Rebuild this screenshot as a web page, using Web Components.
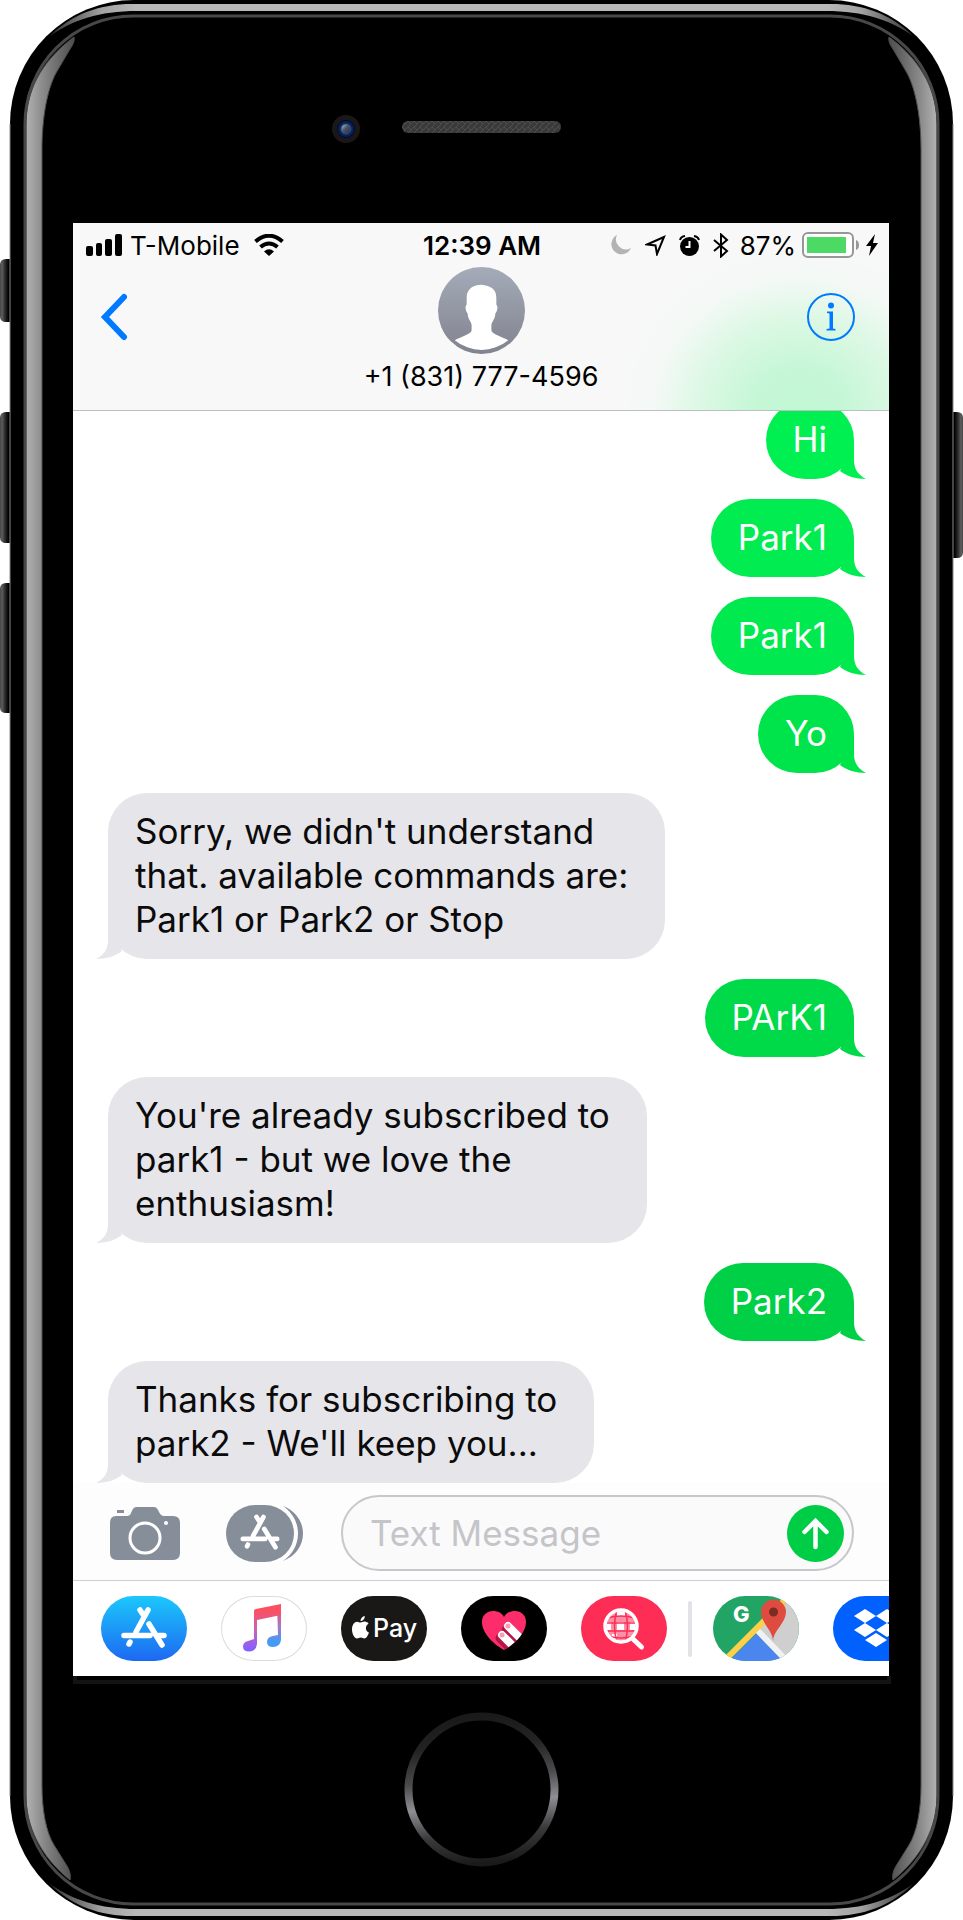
<!DOCTYPE html>
<html lang="en">
<head>
<meta charset="utf-8">
<meta name="viewport" content="width=device-width, initial-scale=1">
<title>Messages</title>
<style>
  body { margin: 0; background: #fff; font-family: Inter, "Liberation Sans", sans-serif; color: #0b0b0c; }
</style>
</head>
<body>
<phone-frame>
  <chat-header>+1 (831) 777-4596</chat-header>
  <message-list>
    <chat-bubble sent style="--tint:#00f052">Hi</chat-bubble>
    <chat-bubble sent style="--tint:#00ec50">Park1</chat-bubble>
    <chat-bubble sent style="--tint:#00e94e">Park1</chat-bubble>
    <chat-bubble sent style="--tint:#00e44b">Yo</chat-bubble>
    <chat-bubble>Sorry, we didn't understand<br>that. available commands are:<br>Park1 or Park2 or Stop</chat-bubble>
    <chat-bubble sent style="--tint:#00da48">PArK1</chat-bubble>
    <chat-bubble>You're already subscribed to<br>park1 - but we love the<br>enthusiasm!</chat-bubble>
    <chat-bubble sent style="--tint:#00d046">Park2</chat-bubble>
    <chat-bubble>Thanks for subscribing to<br>park2 - We'll keep you...</chat-bubble>
  </message-list>
  <message-composer></message-composer>
  <app-strip></app-strip>
</phone-frame>

<script>
const define = (name, html) => customElements.define(name, class extends HTMLElement {
  constructor() {
    super();
    this.attachShadow({ mode: "open" }).innerHTML = html;
  }
});

/* Device body: bezel artwork, camera, speaker, screen and home button */
define("phone-frame", `
<style>
  :host { display: block; position: relative; }
  .shell { position: absolute; inset: 0; width: 100%; height: 100%; display: block; }
  .forehead { position: relative; height: 223px; box-sizing: border-box; padding-top: 115px;
    display: grid; grid-template-columns: 1fr auto 1fr; align-items: start; }
  .camera { justify-self: end; margin-right: 42px; display: block; }
  .speaker { display: block; margin-top: 6px; }
  .screen { position: relative; margin: 0 74px 0 73px; background: #fff; overflow: hidden; }
  .lip { position: relative; margin: 0 72px 0 73px; height: 4px; border: 4px solid #131313; border-top: 0; }
  .chin { position: relative; height: 236px; display: flex; justify-content: center; align-items: flex-start; padding-top: 28px; box-sizing: border-box; }
  .home { border: 0; background: none; padding: 0; width: 155px; height: 155px; border-radius: 50%; }
  .home svg { display: block; }
</style>
<svg class="shell" viewBox="0 0 963 1920" preserveAspectRatio="none" aria-hidden="true">
  <defs>
    <linearGradient id="rail" gradientUnits="userSpaceOnUse" x1="26" y1="0" x2="76" y2="0">
      <stop offset="0" stop-color="#b2b2b2"/><stop offset=".32" stop-color="#8c8c8c"/><stop offset=".8" stop-color="#5c5c5c"/><stop offset="1" stop-color="#4c4c4c"/>
    </linearGradient>
    <linearGradient id="edge" gradientUnits="userSpaceOnUse" x1="50" y1="0" x2="913" y2="0">
      <stop offset="0" stop-color="#333"/><stop offset=".06" stop-color="#a2a2a2"/><stop offset=".1" stop-color="#b8b8b8"/>
      <stop offset=".9" stop-color="#b8b8b8"/><stop offset=".94" stop-color="#a2a2a2"/><stop offset="1" stop-color="#333"/>
    </linearGradient>
    <linearGradient id="key" gradientUnits="userSpaceOnUse" x1="0" y1="0" x2="10" y2="0">
      <stop offset="0" stop-color="#444"/><stop offset=".2" stop-color="#5e5e5e"/><stop offset=".5" stop-color="#2c2c2c"/><stop offset=".85" stop-color="#000"/>
    </linearGradient>
    <g id="side">
      <path d="M26 125C26 92 40 62 74 37C75 42 72 46 70 49L56 73C47 90 42 118 42 150V1785C42 1810 46 1832 54 1845L67 1866C70 1871 71 1876 70 1880C40 1856 26 1826 26 1795Z" fill="url(#rail)" stroke="#4e4e4e"/>
    </g>
    <path id="cap" d="M50 36C72 14 100 4 132 4H831C863 4 891 14 913 36C890 20 864 11 826 11H137C99 11 73 20 50 36Z" fill="url(#edge)"/>
  </defs>
  <g fill="url(#key)">
    <path d="M12 259H6Q0 259 0 265V316Q0 322 6 322H12Z"/>
    <path d="M12 412H6Q0 412 0 418V537Q0 543 6 543H12Z"/>
    <path d="M12 583H6Q0 583 0 589V707Q0 713 6 713H12Z"/>
    <path transform="translate(963 0) scale(-1 1)" d="M12 412H6Q0 412 0 418V552Q0 558 6 558H12Z"/>
  </g>
  <rect x="10" y="0" width="943" height="1920" rx="124" fill="#000"/>
  <path d="M10 124V1796M953 124V1796" stroke="#8a8a8a"/>
  <use href="#side"/><use href="#side" transform="translate(963 0) scale(-1 1)"/>
  <rect x="25" y="16" width="913" height="1888" rx="108" fill="none" stroke="#484848" stroke-width="3"/>
  <use href="#cap"/><use href="#cap" transform="translate(0 1920) scale(1 -1)"/>
</svg>
<div class="forehead">
  <svg class="camera" width="28" height="28" viewBox="0 0 28 28" aria-hidden="true">
    <defs><linearGradient id="lens" x1="0" y1="0" x2="1" y2="1"><stop offset="0" stop-color="#c8ced8"/><stop offset=".45" stop-color="#4a5468"/><stop offset="1" stop-color="#1c2a4a"/></linearGradient></defs>
    <circle cx="14" cy="14" r="14" fill="#1b1719"/><circle cx="14" cy="14" r="9" fill="#020a22"/>
    <circle cx="14" cy="14" r="8" fill="#03225f"/><circle cx="14" cy="14" r="5" fill="url(#lens)" stroke="#3f4e6c"/>
  </svg>
  <svg class="speaker" width="159" height="12" aria-hidden="true">
    <defs><pattern id="mesh" width="6" height="6" patternUnits="userSpaceOnUse"><path d="M0 6L6 0M0 0L3 3" stroke="#4e4e4e"/></pattern></defs>
    <rect width="159" height="12" rx="6" fill="#3a3a3a"/><rect width="159" height="12" rx="6" fill="url(#mesh)"/>
  </svg>
</div>
<main class="screen"><slot></slot></main>
<div class="lip"></div>
<div class="chin">
  <button class="home" aria-label="Home">
    <svg width="155" height="155" viewBox="0 0 155 155">
      <defs><linearGradient id="ring" x1=".45" y1="0" x2=".55" y2="1"><stop offset="0" stop-color="#1a1a1a"/><stop offset=".2" stop-color="#232323"/><stop offset=".42" stop-color="#4a4a4c"/><stop offset=".6" stop-color="#8f8e95"/><stop offset=".8" stop-color="#3a3a3b"/><stop offset="1" stop-color="#1a1a1a"/></linearGradient></defs>
      <circle cx="77.500" cy="77.500" r="73" fill="#000" stroke="url(#ring)" stroke-width="8"/>
    </svg>
  </button>
</div>`);

/* Signal, clock and battery row */
define("status-bar", `
<style>
  :host { display: grid; grid-template-columns: 1fr auto 1fr; align-items: center; height: 44px; padding: 0 11px 0 13px; font-size: 26px; color: #000; }
  div { display: flex; align-items: center; }
  .right { justify-content: flex-end; }
  svg { display: block; flex: none; }
  .bars { margin-right: 8px; }
  .wifi { margin-left: 14px; }
  time { font-weight: 600; }
  .moon { margin-right: 14px; }
  .loc, .alarm { margin-right: 13px; }
  .bt { margin-right: 11px; }
  .batt { margin: 0 6px; }
</style>
<div>
  <svg class="bars" width="36" height="22"><rect y="12" width="7" height="10" rx="2"/><rect x="10" y="9" width="6" height="13" rx="2"/><rect x="19" y="5" width="7" height="17" rx="2"/><rect x="29" width="7" height="22" rx="2"/></svg>
  <span>T-Mobile</span>
  <svg class="wifi" width="30" height="22" viewBox="0 0 30 22"><path d="M1.500 7.500Q15-4 28.500 7.500M6.500 13Q15 6 23.500 13" fill="none" stroke="#000" stroke-width="4"/><path d="M10 17.500Q15 13 20 17.500L15 22Z"/></svg>
</div>
<time>12:39 AM</time>
<div class="right">
  <svg class="moon" width="20" height="20" viewBox="0 0 20 20"><path d="M6 0A10.200 10.200 0 1 0 20 13A10 10 0 0 1 6 0Z" fill="#b3b3b3"/></svg>
  <svg class="loc" width="21" height="21" viewBox="0 0 21 21"><path d="M19 2L2 9.500L10.500 10.500L12 19Z" fill="none" stroke="#000" stroke-width="2"/></svg>
  <svg class="alarm" width="21" height="21" viewBox="0 0 21 21"><circle cx="10.500" cy="11.500" r="9.500"/><path d="M1 5Q2 1.500 6 1M20 5Q19 1.500 15 1" fill="none" stroke="#000" stroke-width="2"/><path d="M10.500 6V12H6.500" fill="none" stroke="#fff" stroke-width="2"/></svg>
  <svg class="bt" width="16" height="25" viewBox="0 0 16 25"><path d="M1 7L14 18L8 23.500V1.500L14 7L1 18" fill="none" stroke="#000" stroke-width="2"/></svg>
  <span>87%</span>
  <svg class="batt" width="58" height="26" viewBox="0 0 58 26"><rect x="1" y="1" width="50" height="24" rx="5" fill="#fff" stroke="#979699" stroke-width="2"/><rect x="5" y="5" width="39" height="16" fill="#4cd964"/><path d="M54 8Q57 9 57 13T54 18Z" fill="#979699"/></svg>
  <svg width="12" height="22" viewBox="0 0 12 22"><path d="M9 0L0 12H5L3 22L12 9H7Z"/></svg>
</div>`);

define("chat-header", `
<style>
  :host { display: block; position: relative; z-index: 1; border-bottom: 1px solid #bcbfbf;
    background: radial-gradient(180px 165px at 89% 100%, #c3f7d4 0%, #c5f7d6 25%, #dcf8e4 55%, rgba(240,249,243,.6) 80%, rgba(248,248,249,0) 100%), #f8f8f9; }
  nav { display: grid; grid-template-columns: 1fr auto 1fr; align-items: start; height: 143px; padding: 0 25px; }
  button { border: 0; background: none; padding: 0; height: 100px; display: flex; align-items: center; }
  .info { justify-self: end; margin-right: 8px; }
  svg { display: block; }
  .who { display: flex; flex-direction: column; align-items: center; gap: 8px; }
  h1 { margin: 0; font-size: 27px; line-height: 30px; font-weight: 400; color: #000; }
</style>
<status-bar></status-bar>
<nav>
  <button aria-label="Back"><svg width="32" height="48" viewBox="0 0 32 48"><path d="M26 4L7 24L26 44" fill="none" stroke="#007aff" stroke-width="6" stroke-linecap="round" stroke-linejoin="miter"/></svg></button>
  <div class="who">
    <svg width="87" height="87" viewBox="0 0 88 88" aria-hidden="true">
      <defs><linearGradient id="av" x1="0" y1="0" x2="0" y2="1"><stop offset="0" stop-color="#a5abb9"/><stop offset="1" stop-color="#81838e"/></linearGradient></defs>
      <circle cx="44" cy="44" r="44" fill="url(#av)"/>
      <path d="M44 18C36 18 29 22 29 31L29 38C27 40 28 45 30 47C30 53 34 55 34 59V64C34 68 22 71 17 74A42 42 0 0 0 71 74C66 71 54 68 54 64V59C54 55 58 53 58 47C60 45 61 40 59 38V31C59 22 53 19 44 18Z" fill="#fff"/>
    </svg>
    <h1><slot></slot></h1>
  </div>
  <button class="info" aria-label="Details"><svg width="50" height="50" viewBox="0 0 50 50"><circle cx="25" cy="25" r="23" fill="none" stroke="#007aff" stroke-width="2"/><circle cx="25" cy="13.500" r="3" fill="#007aff"/><path d="M21 19.500H27V36.500L29.500 37V38.500H20.500V37L23.500 36.500V21.500L21 21Z" fill="#007aff"/></svg></button>
</nav>`);

/* The first bubble is scrolled partly beneath the header */
define("message-list", `
<style>
  :host { display: flex; flex-direction: column; align-items: flex-start; gap: 20px; margin-top: -10px; padding: 0 35px; }
</style><slot></slot>`);

define("chat-bubble", `
<style>
  :host { display: block; position: relative; box-sizing: border-box; padding: 16px 37px 18px 27px; border-radius: 39px;
    font-size: 35px; line-height: 44px; background: #e5e5ea; color: #0b0b0c; white-space: nowrap; --fill: #e5e5ea; }
  :host([sent]) { align-self: flex-end; padding: 16px 27px 18px; background: var(--tint); color: #fff; --fill: var(--tint); }
  svg { position: absolute; bottom: 0; left: -12px; transform: scaleX(-1); }
  :host([sent]) svg { left: auto; right: -12px; transform: none; }
  path { fill: var(--fill); }
</style>
<slot></slot>
<svg width="46" height="39" viewBox="0 0 46 39" aria-hidden="true"><path d="M34 0V20C34 29 38 35 46 39C36 39 26 36 20 31Z"/></svg>`);

const storeMark = `<path d="M47 14L35 36M39 14L43 20M48 28L61 49M28 48L29 46M23 39.500H49M58 39.500H63" fill="none" stroke="#fff" stroke-width="5.500" stroke-linecap="round"/>`;

define("message-composer", `
<style>
  :host { display: block; background: #fdfdfe; border-bottom: 1px solid #cfcfd3; }
  form { display: flex; align-items: center; padding: 12px 35px 9px 37px; }
  button { border: 0; background: none; padding: 0; flex: none; }
  svg { display: block; }
  .apps { margin: 0 38px 0 46px; }
  .field { flex: 1; min-width: 0; box-sizing: border-box; height: 76px; display: flex; align-items: center;
    border: 2px solid #c7c7cc; border-radius: 38px; background: #fafafa; padding: 0 8px 0 27px; }
  input { flex: 1; min-width: 0; border: 0; outline: 0; padding: 0; background: none; font: inherit; font-size: 35px; line-height: 44px; color: #000; }
  input::placeholder { color: #c4c4c9; opacity: 1; }
</style>
<form>
  <button type="button" aria-label="Camera"><svg width="70" height="53" viewBox="0 0 70 53"><path d="M6 9H17Q20 9 21 6Q23 0 26 0H44Q47 0 49 5Q51 9 54 9H63Q70 9 70 16V46Q70 53 63 53H7Q0 53 0 46V16Q0 9 6 9Z" fill="#868e99"/><rect x="7" y="3" width="7" height="3" fill="#868e99"/><circle cx="35" cy="31" r="15" fill="none" stroke="#fff" stroke-width="3"/><circle cx="56" cy="16" r="2" fill="#fff"/></svg></button>
  <button class="apps" type="button" aria-label="Apps"><svg width="77" height="57" viewBox="0 0 77 57"><rect width="68" height="57" rx="29" fill="#868e99"/><path d="M57 1C70 6 77 17 77 28.500C77 40 70 51 57 56C66 50 72 40 72 28.500C72 17 66 7 57 1Z" fill="#868e99"/><g transform="translate(-3 0) scale(.86)">${storeMark}</g></svg></button>
  <div class="field">
    <input type="text" aria-label="Text Message" placeholder="Text Message">
    <button type="button" aria-label="Send"><svg width="57" height="57" viewBox="0 0 57 57"><circle cx="28.500" cy="28.500" r="28.500" fill="#00cd46"/><path d="M28.500 42V17M17.500 27L28.500 16L39.500 27" fill="none" stroke="#fff" stroke-width="4.500" stroke-linecap="round" stroke-linejoin="miter"/></svg></button>
  </div>
</form>`);

define("app-strip", `
<style>
  :host { display: flex; align-items: center; gap: 34px; padding: 15px 28px; overflow: hidden; background: #fff; }
  button { position: relative; flex: none; border: 0; padding: 0; width: 86px; height: 65px; border-radius: 33px; overflow: hidden; background: none; }
  svg { display: block; }
  hr { flex: none; border: 0; margin: 0 -13px; width: 4px; height: 56px; border-radius: 2px; background: #e2e2e7; }
  .store { background: linear-gradient(#1bc8fc, #1d68f2); }
  .music { box-sizing: border-box; box-shadow: inset 0 0 0 1px #dcdcde; }
  .pay { background: #191817; display: flex; align-items: center; padding: 0 0 2px 11px; gap: 4px; color: #fff; font: 500 25px/30px Inter, "Liberation Sans", sans-serif; }
  .touch { background: #000; }
  .find { background: #fd2d55; }
  .drop { background: #0061fe; }
  .g { position: absolute; left: 20px; top: 5px; font: 800 22px/26px Inter, "Liberation Sans", sans-serif; color: #fff; }
</style>
<button class="store" aria-label="App Store"><svg width="87" height="65" viewBox="0 0 87 65">${storeMark}</svg></button>
<button class="music" aria-label="Music"><svg width="87" height="65" viewBox="0 0 87 65">
  <defs><linearGradient id="ml" gradientUnits="userSpaceOnUse" x1="0" y1="10" x2="0" y2="54"><stop offset=".1" stop-color="#fb5060"/><stop offset=".5" stop-color="#d060b0"/><stop offset="1" stop-color="#8460ff"/></linearGradient>
  <linearGradient id="mr" gradientUnits="userSpaceOnUse" x1="0" y1="10" x2="0" y2="50"><stop offset=".1" stop-color="#f05468"/><stop offset=".5" stop-color="#a878c8"/><stop offset=".9" stop-color="#429cf5"/></linearGradient></defs>
  <path d="M56 9H60V44Q59 51 52 51Q46 51 46 46Q46 41 52 40L57 39Z" fill="url(#mr)"/><path d="M33 15Q33 13 35 13L60 8V19L36 24V48Q35 55.500 28 55.500Q22 55.500 22 50.500Q22 46 27 45L33 43Z" fill="url(#ml)"/></svg></button>
<button class="pay" aria-label="Apple Pay"><svg width="17" height="23" viewBox="0 0 17 23"><path d="M8.500 6.500C10 6.500 11 5.500 12.500 5.500C14.500 5.500 16 6.500 16.500 7.700C12.500 10 13.500 15.500 17 16.500C16 19.500 14 22.500 12.500 22.500C11 22.500 10.500 21.500 8.800 21.500C7 21.500 6.500 22.500 5 22.500C2.500 22.500 0 18 0 13.500C0 8.500 2.500 5.700 5 5.700C6.500 5.700 7.500 6.500 8.500 6.500ZM8.500 5C8.500 2.500 10.500 .3 12.700 0C13 2.800 11 5 8.500 5Z" fill="#fff"/></svg><span>Pay</span></button>
<button class="touch" aria-label="Digital Touch"><svg width="87" height="65" viewBox="0 0 87 65"><defs><clipPath id="ht"><path d="M43 54C34 49 21 38 21 26C21 19 26 15 32 15C37 15 41 17 43 21C45 17 49 15 54 15C60 15 65 19 65 26C65 38 52 49 43 54Z"/></clipPath></defs>
  <g clip-path="url(#ht)"><rect width="87" height="65" fill="#fd2d6b"/><path d="M45 34L58 47M39 42L52 55" stroke="#b31645" stroke-width="9" stroke-linecap="round"/><path d="M47 30L64 47M41 39L58 56" stroke="#fff" stroke-width="8" stroke-linecap="round"/><circle cx="47" cy="30" r="2.500" fill="#ff9ab4"/><circle cx="41" cy="39" r="2.500" fill="#ff9ab4"/></g></svg></button>
<button class="find" aria-label="Images"><svg width="87" height="65" viewBox="0 0 87 65"><circle cx="40" cy="30" r="15.500" fill="#ff8fa6"/><path d="M36 26H43V34H36ZM36 16H44V20H36ZM26 26H30V34H26ZM49 26H54V34H49ZM31 38H36V43H31Z" fill="#fff"/><path d="M26 22Q40 18 54 22M24 27H56M24 35H56M27 40Q40 44 53 40M36 14Q31 30 36 46M44 14Q49 30 44 46" fill="none" stroke="#fd2d55" stroke-width="1.500"/><circle cx="40" cy="30" r="16" fill="none" stroke="#fff" stroke-width="3.500"/><path d="M52 43L60.500 51" stroke="#fff" stroke-width="5" stroke-linecap="round"/></svg></button>
<hr>
<button aria-label="Google Maps"><svg width="87" height="65" viewBox="0 0 87 65"><rect width="87" height="65" fill="#22a464"/><path d="M44 35L80 0H87V65H70Z" fill="#cfcfcf"/><path d="M44 37L16 65H72Z" fill="#4b86ee"/><path d="M13 63L75 1" stroke="#fdd04b" stroke-width="6"/><path d="M45 35L75 66" stroke="#f1f1f1" stroke-width="6"/><path d="M60 45C60 35 48 27 48 16A12.500 12.500 0 0 1 73 16C73 27 60 35 60 45Z" fill="#df4b3e"/><circle cx="60.500" cy="16" r="4.500" fill="#7c2b25"/></svg><span class="g">G</span></button>
<button class="drop" aria-label="Dropbox"><svg width="87" height="65" viewBox="0 0 87 65" fill="#fff"><path d="M32 13L43 20L32 27L21 20ZM54 13L65 20L54 27L43 20ZM32 27L43 34L32 41L21 34ZM54 27L65 34L54 41L43 34ZM43 37L54 44L43 51L32 44Z"/></svg></button>`);
</script>
</body>
</html>
